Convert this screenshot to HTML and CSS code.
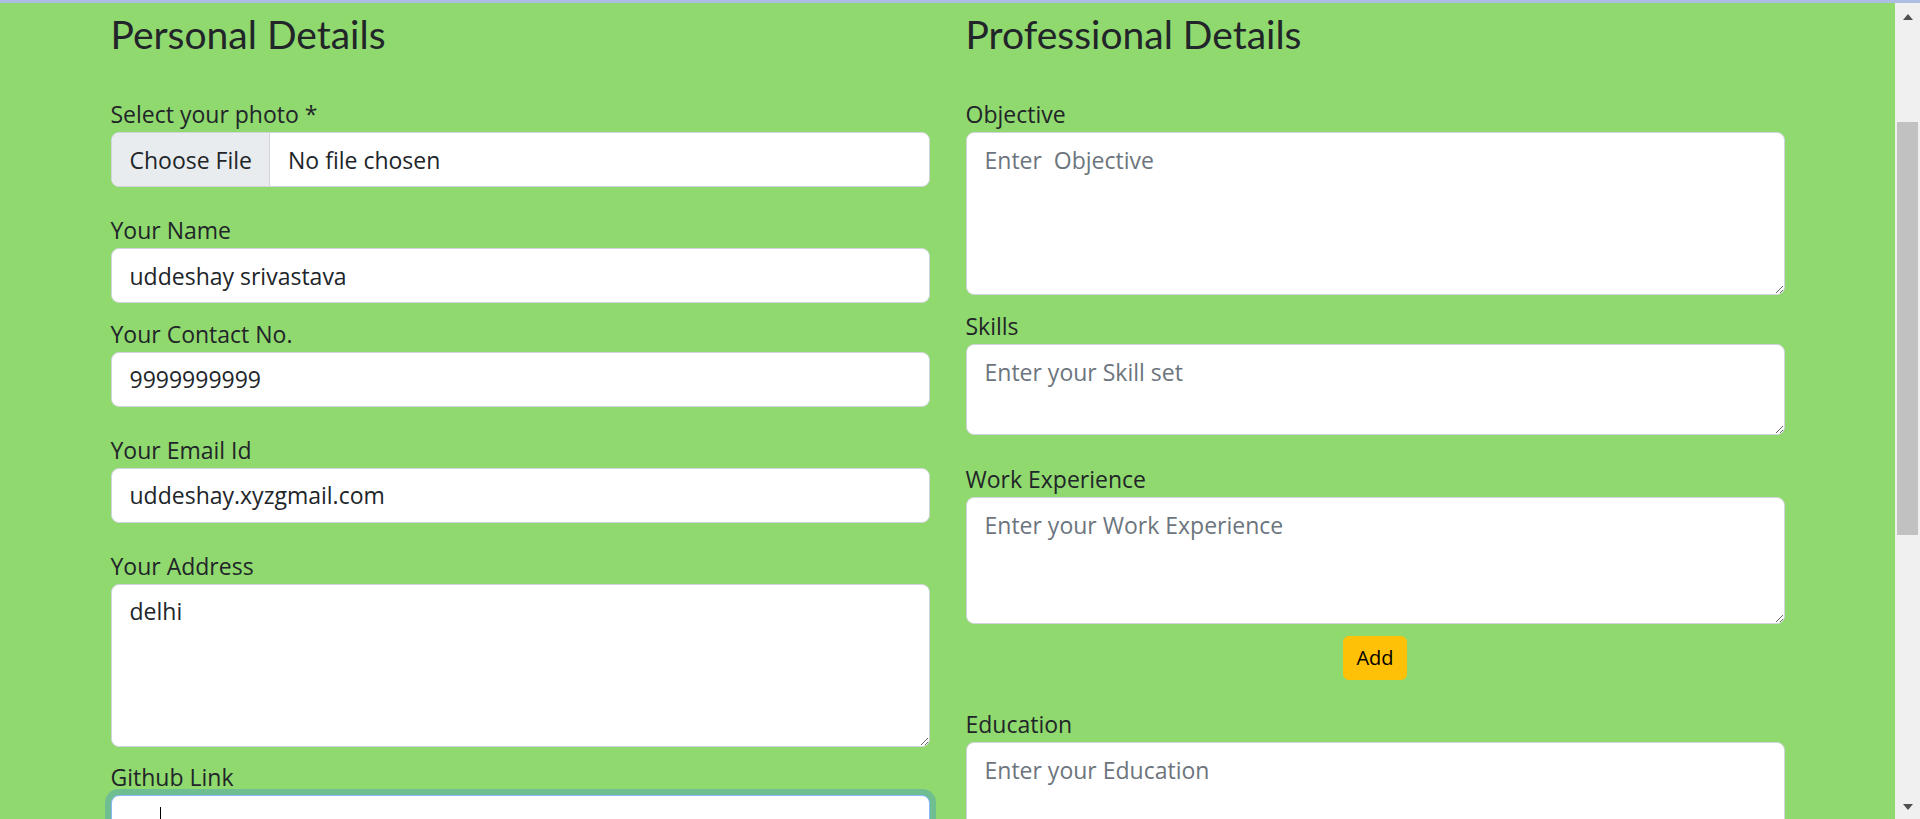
FILE: index.html
```html
<!DOCTYPE html>
<html lang="en">
<head>
<meta charset="utf-8">
<title>Resume Builder</title>
<link rel="stylesheet" href="styles.css">
</head>
<body>
<div class="topline"></div>
<div class="frame">
  <main class="page">
    <div class="container">
      <section class="col col-personal">
        <h2 class="title">Personal Details</h2>
        <div class="field">
          <label class="label">Select your photo *</label>
          <div class="file-input"><span class="file-btn">Choose File</span><span class="file-name">No file chosen</span></div>
        </div>
        <div class="field gap-l">
          <label class="label">Your Name</label>
          <input class="control" type="text" value="uddeshay srivastava">
        </div>
        <div class="field gap-s">
          <label class="label">Your Contact No.</label>
          <input class="control" type="text" value="9999999999">
        </div>
        <div class="field gap-l">
          <label class="label">Your Email Id</label>
          <input class="control" type="text" value="uddeshay.xyzgmail.com">
        </div>
        <div class="field gap-l">
          <label class="label">Your Address</label>
          <textarea class="control rows4">delhi</textarea>
        </div>
        <div class="field gap-s">
          <label class="label">Github Link</label>
          <div class="caret-wrap">
            <input class="control focused" type="text" value="">
            <span class="caret"></span>
          </div>
        </div>
      </section>
      <section class="col col-professional">
        <h2 class="title">Professional Details</h2>
        <div class="field">
          <label class="label">Objective</label>
          <textarea class="control rows4" placeholder="Enter  Objective"></textarea>
        </div>
        <div class="field gap-s">
          <label class="label">Skills</label>
          <textarea class="control rows2" placeholder="Enter your Skill set"></textarea>
        </div>
        <div class="field gap-l">
          <label class="label">Work Experience</label>
          <textarea class="control rows3" placeholder="Enter your Work Experience"></textarea>
        </div>
        <div class="actions">
          <button class="btn-add" type="button">Add</button>
        </div>
        <div class="field gap-l">
          <label class="label">Education</label>
          <textarea class="control rows3" placeholder="Enter your Education"></textarea>
        </div>
      </section>
    </div>
  </main>
  <aside class="scrollbar">
    <span class="arrow up"></span>
    <div class="thumb"></div>
    <span class="arrow down"></span>
  </aside>
</div>
</body>
</html>
```
FILE: styles.css
```css
html, body {
  margin: 0;
  height: 100%;
  overflow: hidden;
}
body {
  font-family: "Open Sans", "Noto Sans", sans-serif;
  font-size: 23px;
  color: #212529;
  background: #90d96e;
}
.topline {
  height: 3px;
  background: #aebde4;
}
.frame {
  display: flex;
  height: 816px;
}
.page {
  flex: 1;
  min-width: 0;
  background: #90d96e;
  overflow: hidden;
}
.container {
  width: 1674px;
  margin: 0 auto;
  display: grid;
  grid-template-columns: 1fr 1fr;
  column-gap: 36px;
}
.col {
  min-width: 0;
}
.title {
  font-family: Lato, "Gill Sans", sans-serif;
  font-size: 39px;
  font-weight: 400;
  line-height: 48px;
  margin: 7px 0 38px;
  color: #212529;
}
.label {
  display: block;
  line-height: 36px;
}
.gap-s {
  margin-top: 12.5px;
}
.gap-l {
  margin-top: 25px;
}
.col-professional .gap-s {
  margin-top: 13px;
}
.col-professional .gap-l {
  margin-top: 26px;
}
.control {
  display: block;
  width: 100%;
  box-sizing: border-box;
  font: inherit;
  line-height: 36px;
  padding: 8.5px 18px;
  border: 1px solid #d0d5dd;
  border-radius: 8px;
  background: #fff;
  color: #212529;
  outline: none;
  margin: 0;
}
.control::placeholder {
  color: #6c757d;
}
textarea.control {
  resize: vertical;
}
.rows2 { height: 91px; }
.rows3 { height: 127px; }
.rows4 { height: 163px; }
.control.focused {
  border-color: #86b7fe;
  box-shadow: 0 0 0 6px rgba(13, 110, 253, 0.25);
}
.caret-wrap {
  position: relative;
}
.caret {
  position: absolute;
  left: 49px;
  top: 12px;
  width: 1px;
  height: 27px;
  background: #000;
}
.file-input {
  display: flex;
  height: 55px;
  box-sizing: border-box;
  border: 1px solid #d0d5dd;
  border-radius: 8px;
  overflow: hidden;
  background: #fff;
  line-height: 54px;
}
.file-btn {
  background: #e9ecef;
  padding: 0 17px 0 18px;
  border-right: 1px solid #d0d5dd;
}
.file-name {
  padding-left: 18px;
}
.actions {
  display: flex;
  justify-content: center;
  margin-top: 12px;
}
.btn-add {
  font-family: inherit;
  font-size: 20px;
  line-height: 30px;
  padding: 6px 12px;
  border: 1px solid #ffc107;
  background: #ffc107;
  border-radius: 6px;
  color: #000;
}
.scrollbar {
  width: 25px;
  flex: none;
  background: #f0f0f0;
  display: flex;
  flex-direction: column;
  align-items: center;
}
.arrow {
  width: 0;
  height: 0;
  border-left: 5.5px solid transparent;
  border-right: 5.5px solid transparent;
}
.arrow.up {
  margin-top: 11px;
  border-bottom: 6px solid #505050;
}
.arrow.down {
  margin-top: auto;
  margin-bottom: 9px;
  border-top: 6px solid #505050;
}
.thumb {
  width: 21px;
  height: 413px;
  margin-top: 102px;
  background: #c1c1c1;
}
```
